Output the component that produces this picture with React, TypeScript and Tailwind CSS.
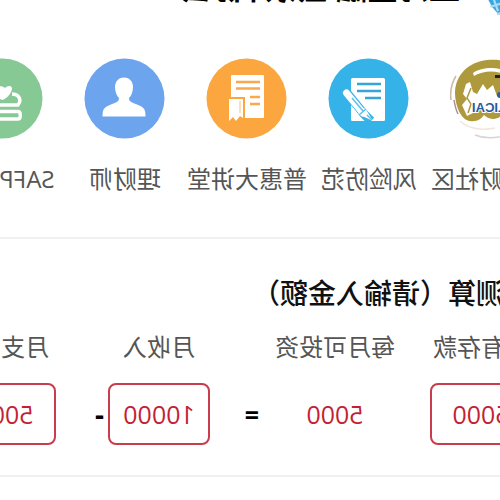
import React, { useState } from 'react';

interface Service {
  id: string;
  label: string;
  icon: React.ReactNode;
}

const LogoIcon = () => (
  <svg viewBox="0 0 81 81" className="size-[81px]" aria-hidden="true">
    <path d="M8 14C18 2 34 1 44 2C62 4 75 16 76 34C76 48 70 62 61 63C54 64 50 61 47 57C42 62 34 62 30 58C20 64 8 58 4 46Z" fill="#ae9a3c" />
    <path d="M58 15C49 9 32 8 20 15L22 18C34 12 47 12 57 18Z" fill="#fff" />
    <path d="M26 44L29 35L34 38L38 27L44 32L48 26L54 36L58 34L61 24L65 26L68 36L64 41L69 47L64 58L58 55L55 50L26 54Z" fill="#fff" />
    <path d="M60 30L64 40L60 46L63 55" fill="none" stroke="#ae9a3c" strokeWidth="1.500" />
    <path d="M75 18C80 26 81 34 80 42" fill="none" stroke="#cbb9a6" strokeWidth="1.500" />
    <path d="M77 42C76 48 75 52 73 56" fill="none" stroke="#a88f92" strokeWidth="1.500" />
    <path d="M71 63C64 70 50 73 36 70" fill="none" stroke="#f1e6df" strokeWidth="1.500" />
    <path d="M56 77C46 81 34 80 24 77" fill="none" stroke="#d9d2d9" strokeWidth="1.500" />
    <path d="M30 17H36V20H30Z" fill="#222" />
    <circle cx="31" cy="37" r="3" fill="#285ba8" />
    <text x="59" y="54" textAnchor="end" fontSize="13" fontWeight="700" fill="#285b9e" stroke="#fff" strokeWidth="2" paintOrder="stroke" className="font-['Liberation_Sans',sans-serif]">LICAI</text>
  </svg>
);

const NoteIcon = () => (
  <svg viewBox="0 0 81 81" className="size-[81px]" aria-hidden="true">
    <circle cx="40.5" cy="40.5" r="40" fill="#35b3e8" />
    <rect x="24" y="20" width="34" height="43" rx="1.5" fill="#fff" />
    <path d="M28 26H52M28 33H52M28 40H44" stroke="#35a4d6" strokeWidth="2.4" />
    <path d="M62 35L45 56L38 63" stroke="#35b3e8" strokeWidth="9" fill="none" />
    <path d="M62.500 35L46 55" stroke="#fff" strokeWidth="7" strokeLinecap="round" />
    <path d="M51 56L44 50L36 63Z" fill="#fff" />
    <path d="M57 40L46 53M50 57L43 51M42 57L37 62" stroke="#5fc0ea" strokeWidth="1.500" />
  </svg>
);

const CourseIcon = () => (
  <svg viewBox="0 0 81 81" className="size-[81px]" aria-hidden="true">
    <circle cx="40.5" cy="40.5" r="40" fill="#fba63f" />
    <rect x="23" y="17" width="33" height="43" rx="1" fill="#fff" />
    <path d="M27 24H51M27 30.500H51M27 39H37M27 46H37" stroke="#f8a94d" strokeWidth="2.600" />
    <path d="M42 39H59V65L50 60L42 65Z" fill="#fba63f" />
    <path d="M44 41H58V63L54 59L51 63L47 58L44 60Z" fill="#fff" />
    <path d="M47 43V55" stroke="#fdd3a0" strokeWidth="1.500" />
  </svg>
);

const AdvisorIcon = () => (
  <svg viewBox="0 0 81 81" className="size-[81px]" aria-hidden="true">
    <circle cx="40.5" cy="40.5" r="40" fill="#6ca4ee" />
    <path d="M41 19.500C47 19.500 50 24 50 29C50 34 48 38 46 40C46 44 49 44.500 54 46.500C61 49 62.500 51 62.500 58.500H19.500C19.500 51 21 49 28 46.500C33 44.500 36 44 36 40C34 38 32 34 32 29C32 24 35 19.500 41 19.500Z" fill="#fff" />
  </svg>
);

const CertIcon = () => (
  <svg viewBox="0 0 81 81" className="size-[81px]" aria-hidden="true">
    <circle cx="40.5" cy="40.5" r="40" fill="#86c995" />
    <path d="M31 30C32 27 36 28 38 30C40 28 44 28 47 29L52 34C50 38 46 40 40 42C36 40 31 35 31 30Z" fill="#fff" />
    <path d="M31 36C24 36 21 42 25 47H58" fill="none" stroke="#fff" strokeWidth="3.500" />
    <path d="M60 53.500H25C22 53.500 22 61 25 61H60" fill="none" stroke="#fff" strokeWidth="3.500" />
  </svg>
);

const SERVICES: Service[] = [
  { id: 'community', label: '新理财社区', icon: <LogoIcon /> },
  { id: 'risk', label: '风险防范', icon: <NoteIcon /> },
  { id: 'course', label: '普惠大讲堂', icon: <CourseIcon /> },
  { id: 'advisor', label: '理财师', icon: <AdvisorIcon /> },
  { id: 'safp', label: 'SAFP认证', icon: <CertIcon /> },
];

const labelClass = 'block text-2xl leading-8 text-[#555] whitespace-nowrap';
const inputClass = 'block w-full h-[62px] mt-5 rounded-lg border-2 border-[#c93c4c] bg-white text-center text-[25px] font-medium text-[#c41f35] outline-none';

const App: React.FC = () => {
  const [savings, setSavings] = useState('5000');
  const [income, setIncome] = useState('10000');
  const [expense, setExpense] = useState('5000');

  return (
    <div className="w-full min-h-screen overflow-hidden bg-white -scale-x-100 font-['Open_Sans','Noto_Sans_CJK_SC',sans-serif]">
      <header className="flex items-center -mt-12 -ml-[56px] h-[70px]">
        <svg viewBox="0 0 64 64" className="size-[70px] shrink-0" aria-hidden="true">
          <circle cx="32" cy="32" r="32" fill="#3ba7e2" />
          <path d="M50 47L60 50M46 54L54 57M57 43L53 54" stroke="#a9dcf5" strokeWidth="2" />
        </svg>
        <h1 className="ml-[26px] text-[31px] leading-10 font-bold text-black whitespace-nowrap">上海金融理财师协会</h1>
      </header>

      <nav className="flex mt-9 -ml-[52px] pb-[42px]">
        {SERVICES.map(service => (
          <a key={service.id} href={`#${service.id}`} className="flex flex-col items-center w-[122px] shrink-0">
            {service.icon}
            <span className="mt-6 text-2xl leading-8 text-[#555] whitespace-nowrap">{service.label}</span>
          </a>
        ))}
      </nav>

      <section className="border-y-2 border-[#f0f0f0] pt-9 pb-[30px]">
        <h2 className="-ml-[60px] text-[28px] leading-9 font-medium text-[#111] whitespace-nowrap">理财测算（请输入金额）</h2>
        <div className="flex -ml-8 mt-5">
          <div className="w-[102px] shrink-0">
            <label htmlFor="savings" className={`${labelClass} text-center`}>现有存款</label>
            <input id="savings" value={savings} onChange={e => setSavings(e.target.value)} className={inputClass} />
          </div>
          <div className="ml-[35px] w-[120px] shrink-0 text-center">
            <span className={labelClass}>每月可投资</span>
            <output className="block mt-5 text-[25px] leading-[62px] font-medium text-[#c41f35]">{Number(income) - Number(expense)}</output>
          </div>
          <span className="w-[65px] shrink-0 pl-4 self-end text-[25px] leading-[62px] font-bold text-black">=</span>
          <div className="w-[102px] shrink-0">
            <label htmlFor="income" className={`${labelClass} text-center`}>月收入</label>
            <input id="income" value={income} onChange={e => setIncome(e.target.value)} className={inputClass} />
          </div>
          <span className="w-[52px] shrink-0 pl-1 self-end text-[28px] leading-[62px] font-bold text-black">-</span>
          <div className="w-[102px] shrink-0">
            <label htmlFor="expense" className={`${labelClass} pl-[7px]`}>月支出</label>
            <input id="expense" value={expense} onChange={e => setExpense(e.target.value)} className={inputClass} />
          </div>
        </div>
      </section>
    </div>
  );
};

export default App;
